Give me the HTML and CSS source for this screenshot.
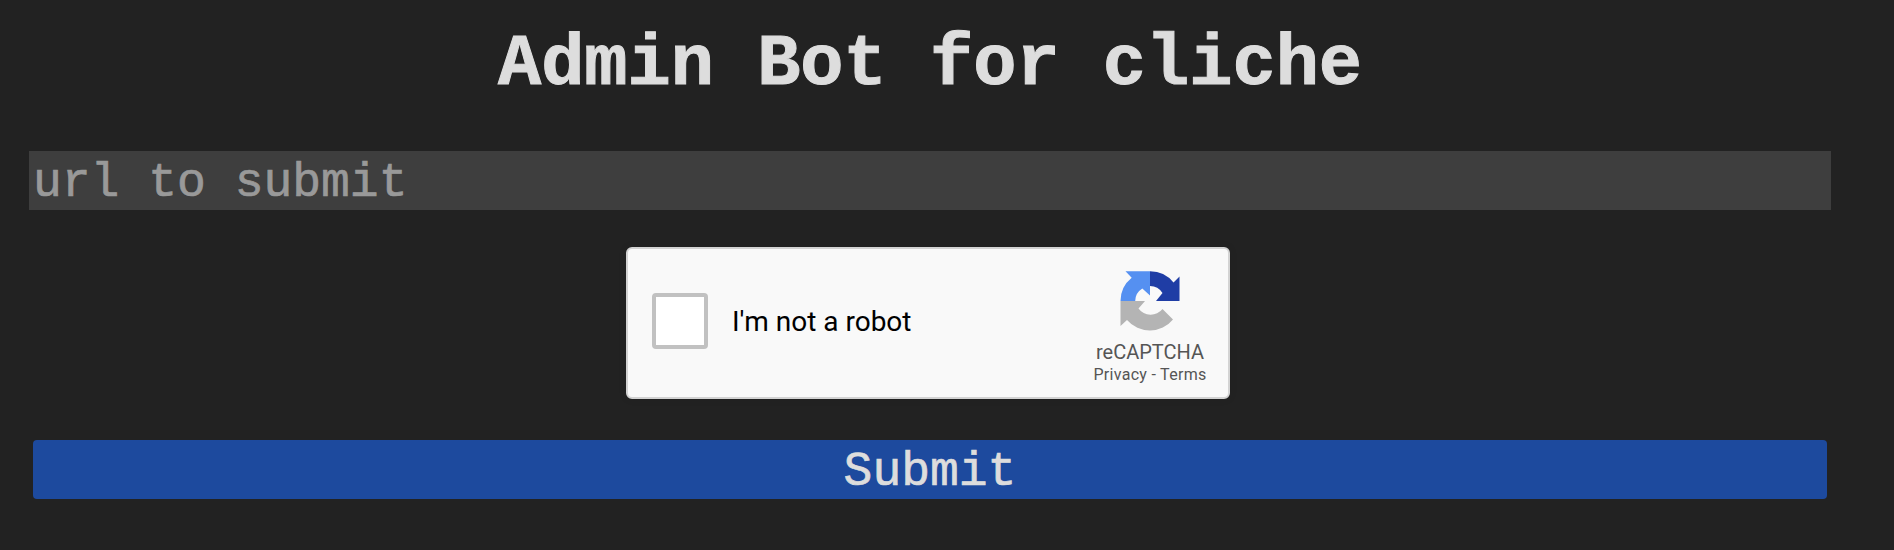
FILE: index.html
```html
<!DOCTYPE html>
<html lang="en">
<head>
<meta charset="utf-8">
<title>Admin Bot for cliche</title>
<link rel="stylesheet" href="styles.css">
</head>
<body>
<form class="page">
  <h1 class="title">Admin Bot for cliche</h1>
  <input class="url" type="text" placeholder="url to submit">
  <div class="captcha">
    <span class="checkbox"></span>
    <span class="label">I'm not a robot</span>
    <div class="brand">
      <svg class="logo" viewBox="0 0 60 60" width="60" height="60">
        <path fill="#1f3da5" d="M30 0.3A30 30 0 0 1 53.5 11.5L59.5 5.5V30H36L42.5 22A15 15 0 0 0 30 15Z"/>
        <path fill="#5590f1" d="M30 0.3V24.5L22.3 17.5A15 15 0 0 0 15.2 30H0.5A30 30 0 0 1 11.7 6.7L5.5 0.3Z"/>
        <path fill="#b4b4b4" d="M0.5 30H25L18.5 37.500A15 15 0 0 0 42.500 38L53 48.500A30 30 0 0 1 7 49L0.500 55Z"/>
      </svg>
      <div class="name">reCAPTCHA</div>
      <div class="links">Privacy - Terms</div>
    </div>
  </div>
  <button class="submit" type="button">Submit</button>
</form>
</body>
</html>
```
FILE: styles.css
```css
body {
  margin: 0;
  height: 550px;
  overflow: hidden;
  background: #222;
  color: #ddd;
  font-family: "Courier New", "Liberation Mono", monospace;
}
.page {
  display: flex;
  flex-direction: column;
  align-items: center;
  box-sizing: border-box;
  width: 1802px;
  margin-left: 29px;
  padding-top: 24px;
}
.title {
  margin: 0 0 45px;
  font-size: 72px;
  line-height: 82px;
  font-weight: bold;
  white-space: pre;
  -webkit-text-stroke: 1px #ddd;
}
.url {
  box-sizing: border-box;
  width: 100%;
  height: 59px;
  padding: 5px 4px 1px;
  border: 0;
  outline: 0;
  background: #3e3e3e;
  color: #ddd;
  font: 48px "Courier New", "Liberation Mono", monospace;
}
.url::placeholder {
  color: #999;
  -webkit-text-stroke: 0.7px #999;
}
.captcha {
  display: flex;
  align-items: center;
  box-sizing: border-box;
  width: 604px;
  height: 152px;
  margin: 37px 4px 37px 0;
  padding-left: 24px;
  border: 2px solid #d3d3d3;
  border-radius: 6px;
  background: #f9f9f9;
  box-shadow: 0 0 8px rgba(0, 0, 0, 0.08);
  font-family: Roboto, sans-serif;
}
.checkbox {
  box-sizing: border-box;
  width: 56px;
  height: 56px;
  margin-top: -4px;
  border: 4px solid #c1c1c1;
  border-radius: 4px;
  background: #fff;
}
.label {
  margin-top: -2px;
  margin-left: 24px;
  color: #000;
  font-size: 28px;
  line-height: 34px;
}
.brand {
  width: 140px;
  margin-top: 6px;
  margin-left: auto;
  margin-right: 8px;
  color: #555;
  text-align: center;
}
.logo {
  display: block;
  margin: 4px auto 9px;
}
.name {
  font-size: 20px;
  line-height: 24px;
}
.links {
  font-size: 16px;
  line-height: 22px;
  letter-spacing: 0.3px;
}
.submit {
  width: 1794px;
  height: 59px;
  margin-top: 4px;
  padding: 4px 0 0;
  border: 0;
  border-radius: 4px;
  background: #1d4a9e;
  color: #ddd;
  font: 48px "Courier New", "Liberation Mono", monospace;
  -webkit-text-stroke: 0.7px #ddd;
}
```
